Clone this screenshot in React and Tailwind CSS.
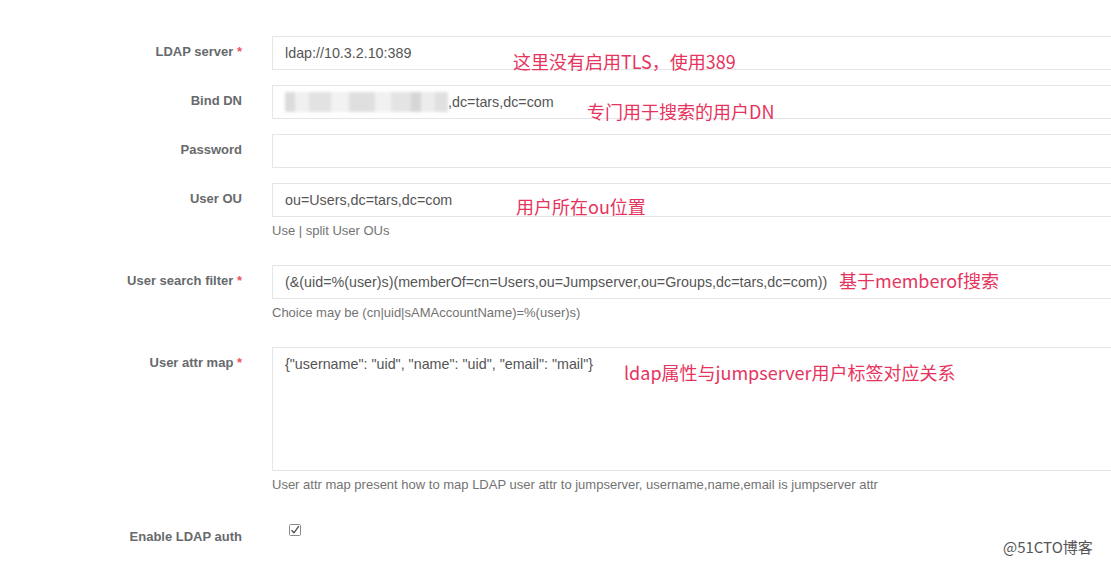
import React from "react";

const labelCls =
  "w-[257px] shrink-0 pr-[15px] pt-[7px] text-right text-[13px] font-bold leading-[18px] text-[#676a6c]";
const inputCls =
  "h-[34px] w-[860px] border border-[#e5e6e7] bg-white px-[12px] text-[14.3px] leading-[32px] text-[#555]";
const helpCls = "mt-[5px] mb-[10px] text-[13px] leading-[18px] text-[#737373]";

function Req() {
  return <span className="text-[#ed5565]"> *</span>;
}

function Row({ label, required, children }) {
  return (
    <div className="mb-[15px] flex">
      <div className={labelCls}>
        {label}
        {required && <Req />}
      </div>
      <div className="flex-1 pl-[15px]">{children}</div>
    </div>
  );
}

function Blurred() {
  const blocks = [
    ["w-[10px]", "bg-[#dcdcdc]"],
    ["w-[14px]", "bg-[#f0f0f0]"],
    ["w-[22px]", "bg-[#e2e2e2]"],
    ["w-[18px]", "bg-[#f2f2f2]"],
    ["w-[26px]", "bg-[#dfdfdf]"],
    ["w-[16px]", "bg-[#f1f1f1]"],
    ["w-[20px]", "bg-[#e4e4e4]"],
    ["w-[10px]", "bg-[#d6d6d6]"],
    ["w-[14px]", "bg-[#ececec]"],
    ["w-[13px]", "bg-[#e0e0e0]"],
  ];
  return (
    <span className="inline-flex h-[20px] items-stretch align-middle blur-[1.5px]">
      {blocks.map(([w, c], i) => (
        <span key={i} className={`${w} ${c}`} />
      ))}
    </span>
  );
}

const note = "absolute text-[18px] leading-none text-[#e6345e] whitespace-nowrap";
const cjk = { fontFamily: '"Noto Sans CJK SC", "Noto Sans", sans-serif' };

export default function App() {
  return (
    <div
      className="relative h-[565px] w-[1111px] overflow-hidden bg-white pt-[36px]"
      style={{ fontFamily: '"Liberation Sans", Arial, sans-serif' }}
    >
      <Row label="LDAP server" required>
        <div className={inputCls}>ldap://10.3.2.10:389</div>
      </Row>
      <Row label="Bind DN">
        <div className={`${inputCls} flex items-center px-[11px]`}>
          <Blurred />
          <span>,dc=tars,dc=com</span>
        </div>
      </Row>
      <Row label="Password">
        <div className={inputCls} />
      </Row>
      <Row label="User OU">
        <div className={inputCls}>ou=Users,dc=tars,dc=com</div>
        <div className={helpCls}>Use | split User OUs</div>
      </Row>
      <Row label="User search filter" required>
        <div className={inputCls}>
          (&amp;(uid=%(user)s)(memberOf=cn=Users,ou=Jumpserver,ou=Groups,dc=tars,dc=com))
        </div>
        <div className={helpCls}>Choice may be (cn|uid|sAMAccountName)=%(user)s)</div>
      </Row>
      <Row label="User attr map" required>
        <div className="h-[124px] w-[860px] border border-[#e5e6e7] bg-white px-[12px] py-[6px] text-[14.3px] leading-[20px] text-[#555]">
          {'{"username": "uid", "name": "uid", "email": "mail"}'}
        </div>
        <div className={helpCls}>
          User attr map present how to map LDAP user attr to jumpserver, username,name,email is jumpserver attr
        </div>
      </Row>
      <div className="flex">
        <div className={`${labelCls} pt-[9px]`}>Enable LDAP auth</div>
        <div className="flex-1 pl-[15px]">
          <svg className="ml-[17px] mt-[5px]" width="12" height="12" viewBox="0 0 12 12">
            <rect x="0.5" y="0.5" width="11" height="11" rx="1" fill="white" stroke="#8a8a8a" />
            <path d="M2.5 6.2 L5 8.8 L9.8 2.2" fill="none" stroke="#4a4a4a" strokeWidth="1.3" />
          </svg>
        </div>
      </div>

      <span className={`${note} left-[513px] top-[52px]`} style={cjk}>这里没有启用TLS，使用389</span>
      <span className={`${note} left-[587px] top-[102px]`} style={cjk}>专门用于搜索的用户DN</span>
      <span className={`${note} left-[516px] top-[197px]`} style={cjk}>用户所在ou位置</span>
      <span className={`${note} left-[839px] top-[271px]`} style={cjk}>基于memberof搜索</span>
      <span className={`${note} left-[624px] top-[363px]`} style={cjk}>ldap属性与jumpserver用户标签对应关系</span>

      <span
        className="absolute left-[1001px] top-[537px] bg-white/80 px-[2px] text-[15px] leading-[20px] text-[#555]"
        style={cjk}
      >
        @51CTO博客
      </span>
    </div>
  );
}
